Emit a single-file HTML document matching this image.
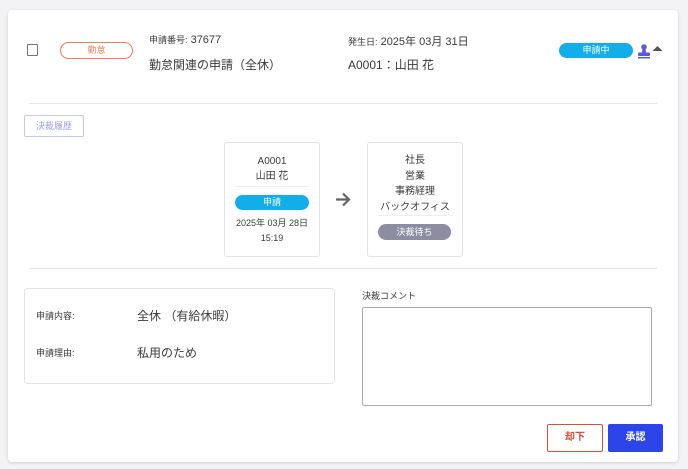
<!DOCTYPE html>
<html><head><meta charset="utf-8"><style>
*{box-sizing:border-box;margin:0;padding:0}
body{width:688px;height:469px;background:#f3f3f5;font-family:"Liberation Sans","Noto Sans CJK JP",sans-serif;color:#3a3a3a;position:relative;overflow:hidden}
.card{position:absolute;left:8px;top:10px;width:670px;height:452px;background:#fff;border-radius:4px;box-shadow:0 1px 3px rgba(0,0,0,.15)}
.a{position:absolute;white-space:nowrap}
.hr{position:absolute;height:1px;background:#e4e4e8}
.pill{position:absolute;border-radius:9px;text-align:center;font-size:9px;line-height:15px;color:#fff}
.box{position:absolute;border:1px solid #e3e3e6;border-radius:3px;background:#fff}
</style></head><body>
<div class="card"></div>
<div class="a" style="left:27px;top:44px;width:11px;height:12px;border:1.5px solid #777;border-radius:1px"></div>
<div class="pill" style="left:60px;top:42px;width:73px;height:17px;border:1px solid #f07a5a;color:#f07a5a;line-height:15px">勤怠</div>
<div class="a" style="left:149px;top:33px;font-size:11px"><span style="font-size:9px">申請番号:</span> 37677</div>
<div class="a" style="left:149px;top:56px;font-size:12px">勤怠関連の申請（全休）</div>
<div class="a" style="left:348px;top:33px;font-size:11px"><span style="font-size:9px">発生日:</span> 2025年 03月 31日</div>
<div class="a" style="left:348px;top:56px;font-size:12px">A0001：山田 花</div>
<div class="pill" style="left:559px;top:43px;width:74px;height:15px;background:#13aee9">申請中</div>
<svg class="a" style="left:637px;top:44px" width="14" height="15" viewBox="0 0 14 15"><circle cx="7" cy="3" r="2.8" fill="#5b5bd6"/><path d="M5.5 4.5H8.5L9 8.5H5Z" fill="#5b5bd6"/><rect x="1" y="8.5" width="12" height="3.5" rx="1" fill="#5b5bd6"/><rect x="1" y="13" width="12" height="1.5" fill="#5b5bd6"/></svg>
<svg class="a" style="left:652px;top:45px" width="11" height="7"><path d="M0.5 6 L5.5 1 L10.5 6Z" fill="#555"/></svg>
<div class="hr" style="left:29px;top:103px;width:628px"></div>
<div class="a" style="left:24px;top:115px;width:60px;height:22px;border:1px solid #c5c8f5;border-radius:2px;color:#9aa0e8;font-size:9px;text-align:center;line-height:20px">決裁履歴</div>
<div class="box" style="left:224px;top:142px;width:96px;height:115px"></div>
<div class="a" style="left:224px;top:154px;width:96px;text-align:center;font-size:10px;line-height:15px">A0001<br>山田 花</div>
<div class="hr" style="left:235px;top:186px;width:74px;background:#eee"></div>
<div class="pill" style="left:235px;top:195px;width:74px;height:15px;background:#13aee9">申請</div>
<div class="a" style="left:224px;top:216px;width:96px;text-align:center;font-size:9px;line-height:15px">2025年 03月 28日<br>15:19</div>
<svg class="a" style="left:335px;top:192px" width="16" height="15" viewBox="0 0 16 15"><path d="M1 7.5H14M8 1.5L14 7.5L8 13.5" stroke="#666" stroke-width="2.2" fill="none"/></svg>
<div class="box" style="left:367px;top:142px;width:96px;height:115px"></div>
<div class="a" style="left:367px;top:153px;width:96px;text-align:center;font-size:10px;line-height:15.5px">社長<br>営業<br>事務経理<br>バックオフィス</div>
<div class="hr" style="left:378px;top:215px;width:74px;background:#eee"></div>
<div class="pill" style="left:378px;top:224px;width:73px;height:16px;background:#8c8ca3;line-height:16px">決裁待ち</div>
<div class="hr" style="left:29px;top:268px;width:628px"></div>
<div class="box" style="left:24px;top:288px;width:311px;height:96px"></div>
<div class="a" style="left:36px;top:309px;font-size:9px">申請内容:</div>
<div class="a" style="left:137px;top:307px;font-size:12px">全休 （有給休暇）</div>
<div class="a" style="left:36px;top:346px;font-size:9px">申請理由:</div>
<div class="a" style="left:137px;top:344px;font-size:12px">私用のため</div>
<div class="a" style="left:362px;top:289px;font-size:9px">決裁コメント</div>
<div class="a" style="left:362px;top:307px;width:290px;height:99px;border:1px solid #aaa;border-radius:2px"></div>
<div class="a" style="left:547px;top:424px;width:56px;height:28px;border:1px solid #e04a3a;border-radius:2px;color:#e04a3a;font-size:10px;font-weight:bold;text-align:center;line-height:26px">却下</div>
<div class="a" style="left:608px;top:424px;width:55px;height:28px;background:#2d45e8;border-radius:2px;color:#fff;font-size:10px;font-weight:bold;text-align:center;line-height:28px">承認</div>
</body></html>
